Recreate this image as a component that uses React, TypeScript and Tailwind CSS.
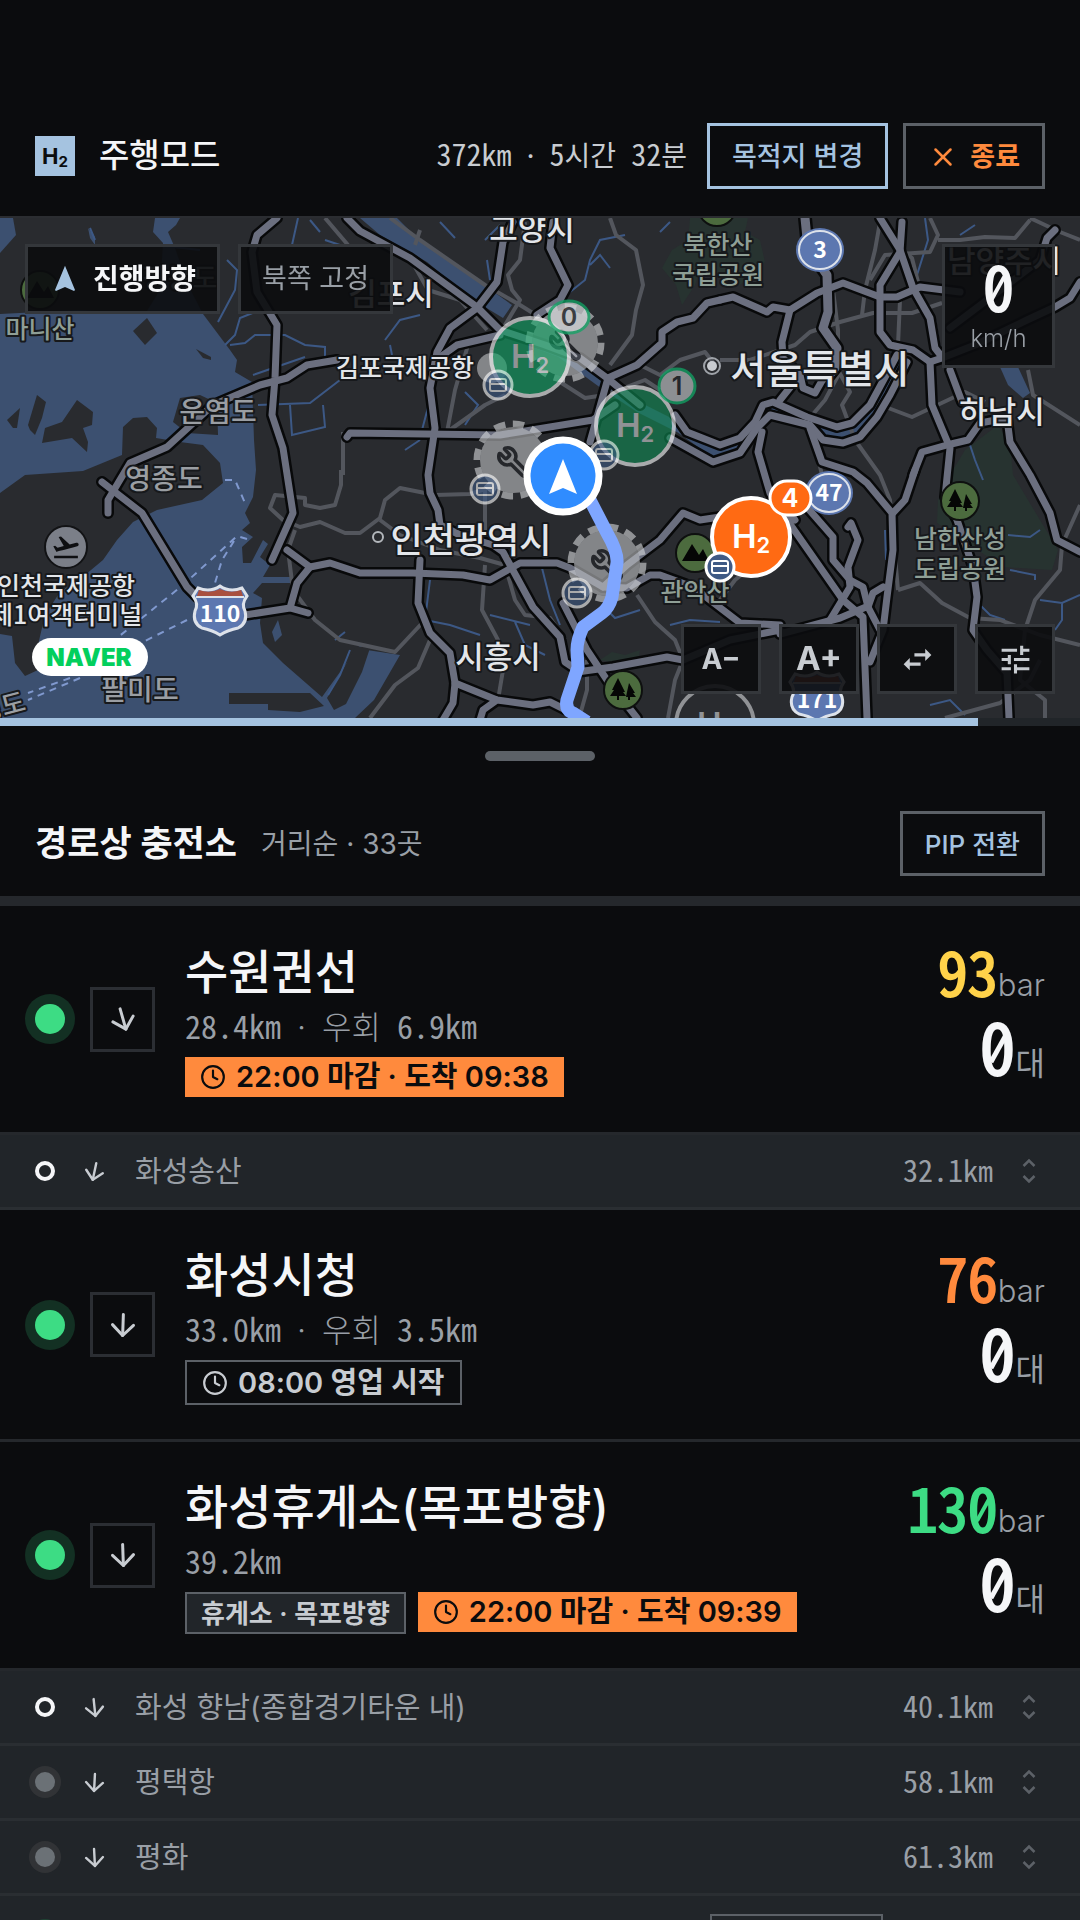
import React from 'react';
import { ArrowDown, Clock, Wrench, X } from 'lucide-react';
import { MdFlightTakeoff, MdNavigation, MdSwapHoriz, MdTune } from 'react-icons/md';
import clsx from 'clsx';

type Tone = 'yellow' | 'orange' | 'green';
type Status = 'open' | 'closed' | 'unknown' | 'dim';

interface Badge {
  kind: 'closing' | 'opening' | 'place';
  label: string;
}

interface Station {
  name: string;
  distance: string;
  turn: string;
  status: Status;
  detour?: string;
  bar?: number;
  tone?: Tone;
  queue?: number;
  badges?: Badge[];
}

const STATIONS: Station[] = [
  {
    name: '수원권선',
    distance: '28.4km',
    detour: '6.9km',
    turn: '-rotate-[16deg]',
    status: 'open',
    bar: 93,
    tone: 'yellow',
    queue: 0,
    badges: [{ kind: 'closing', label: '22:00 마감 · 도착 09:38' }],
  },
  { name: '화성송산', distance: '32.1km', turn: 'rotate-12', status: 'closed' },
  {
    name: '화성시청',
    distance: '33.0km',
    detour: '3.5km',
    turn: 'rotate-2',
    status: 'open',
    bar: 76,
    tone: 'orange',
    queue: 0,
    badges: [{ kind: 'opening', label: '08:00 영업 시작' }],
  },
  {
    name: '화성휴게소(목포방향)',
    distance: '39.2km',
    turn: '-rotate-2',
    status: 'open',
    bar: 130,
    tone: 'green',
    queue: 0,
    badges: [
      { kind: 'place', label: '휴게소 · 목포방향' },
      { kind: 'closing', label: '22:00 마감 · 도착 09:39' },
    ],
  },
  { name: '화성 향남(종합경기타운 내)', distance: '40.1km', turn: '-rotate-6', status: 'closed' },
  { name: '평택항', distance: '58.1km', turn: 'rotate-3', status: 'unknown' },
  { name: '평화', distance: '61.3km', turn: '-rotate-3', status: 'unknown' },
  {
    name: '행담도',
    distance: '70.2km',
    turn: 'rotate-0',
    status: 'dim',
    badges: [{ kind: 'place', label: '휴게소 · 양방' }],
  },
];

const TONES: Record<Tone, string> = {
  yellow: 'text-[#ffd24a]',
  orange: 'text-[#ff8a3d]',
  green: 'text-[#3ddc84]',
};

const MONO = "font-['Noto_Sans_Mono_CJK_KR','Noto_Sans_CJK_KR',monospace]";
const SANS = "font-['Inter','Noto_Sans_CJK_KR',sans-serif]";

// Digits stay monospaced, Hangul keeps its proportional width.
const MixedText: React.FC<{ text: string; hangul: string }> = ({ text, hangul }) => (
  <>
    {text.split(/([가-힣·]+)/).map((part, i) =>
      i % 2 ? (
        <span key={i} className={clsx(SANS, hangul)}>
          {part}
        </span>
      ) : (
        part
      )
    )}
  </>
);

// The mono face has no medium weight and a plain zero, so large readings
// are thickened with a stroke and get their slash on top.
const Reading: React.FC<{ value: number; className?: string }> = ({ value, className }) => (
  <span className={clsx(MONO, 'leading-none font-normal [-webkit-text-stroke:2px_currentColor]', className)}>
    {String(value)
      .split('')
      .map((digit, i) =>
        digit === '0' ? (
          <span key={i} className="relative inline-block">
            0
            <span
              aria-hidden="true"
              className="absolute top-[57%] left-1/2 h-[42%] w-[13%] -translate-x-1/2 -translate-y-1/2 rotate-[29deg] bg-current"
            />
          </span>
        ) : (
          digit
        )
      )}
  </span>
);

/* ---------- map ---------- */

const LAND = [
  'M133 331 147 318 157 333 145 345Z',
  'M196 349 211 357 211 360 203 358Z',
  'M7 420 20 408 17 428 13 428Z',
  'M28 425 37 395 46 402 42 418 35 435 30 430Z',
  'M42 443 45 428 62 422 77 400 93 412 92 425 83 428 88 442 87 452 72 438Z',
  'M180 398 200 395 217 403 218 435 187 433 173 422Z',
  'M0 493 25 475 83 471 122 455 123 427 133 418 147 417 157 428 156 438 180 442 203 445 220 463 223 483 202 500 157 510 133 522 117 540 103 560 85 575 60 592 45 615 38 645 38 670 25 676 15 663 12 636 0 634Z',
  'M229 693 310 693 324 706 300 712 268 710 268 704 229 704Z',
  'M327 698 334 710 346 704 362 672 370 648 356 646 340 675Z',
];

const MINOR_ROADS = [
  'M390 218 420 240 485 285 520 305 560 330',
  'M325 218 348 245 M410 258 428 290 460 300 487 330',
  'M420 230 415 245',
  'M525 222 520 260 508 275 512 290 520 300 505 325 487 338',
  'M610 218 616 235 636 250 643 285 636 310 632 335 610 365',
  'M468 345 455 390 447 432 M447 432 485 405 505 395',
  'M560 382 585 398 605 395 645 380 660 390',
  'M640 365 660 375 680 360 705 352 715 365',
  'M720 360 750 360 795 345 810 332 840 322 873 313 912 313 942 303',
  'M880 222 875 250 865 290 862 315',
  'M930 218 938 235 930 252 885 255 870 280',
  'M938 240 960 240 985 237 1015 238 1030 220',
  'M1030 218 1060 232 1080 240',
  'M833 290 838 330 838 370 850 392 842 405 855 440 880 475 890 500 898 590',
  'M902 250 912 258 920 290 900 300 898 345',
  'M840 372 825 400 808 420 815 445 822 475',
  'M875 403 912 417 965 392 985 402',
  'M1028 370 1033 395 1080 425',
  'M343 475 343 432',
  'M341 470 341 485 335 505 320 508 305 505 305 498 275 495 270 508 283 520 300 527 320 522 345 533 360 533 380 518 385 500 400 488 435 495 470 494 485 489 485 530',
  'M295 530 288 550 293 590 315 620 340 640 395 652 425 620',
  'M380 520 400 535 440 550 480 558 505 565',
  'M485 565 482 610 498 640 503 670 498 700',
  'M505 565 515 600 525 615 550 618 565 640',
  'M430 640 418 668 395 685 370 718',
  'M560 500 560 470',
  'M637 595 655 622 675 640 683 660 675 680 668 718',
  'M587 660 587 690 580 715',
  'M720 600 735 580 745 572',
  'M898 590 920 583 942 603 970 618 1000 620 1040 635 1080 645',
  'M1080 505 1062 545 1060 570 1035 600 1025 630 1020 680 1045 700 1045 718',
  'M945 718 1000 703 1030 680 1040 660',
];

const MAJOR_ROADS = [
  'M277 218 257 235 252 252 257 292 277 325 275 378 272 415 283 448 293 513 272 560',
  'M337 360 307 365 287 378 260 385 213 405 167 447 130 463 108 500 108 513',
  'M102 482 142 513 187 587 200 600',
  'M245 615 290 608 308 613 M290 608 297 583 310 567 287 550',
  'M310 567 330 563 360 573 413 573 463 575 490 580 520 563 557 563 570 568 603 587 627 588 650 575 660 575 693 587 740 623 780 625',
  'M347 218 360 231 410 258 477 307 500 330 545 345 580 358 607 378 640 405',
  'M513 222 503 242 497 282 477 308 450 328 437 352 430 388 435 428 428 475 430 493 438 510 440 525 460 535 493 545 503 552 533 607 560 637 565 662 577 670',
  'M553 222 550 248 568 285 560 300 537 315',
  'M500 335 457 345 443 355',
  'M347 437 350 433 500 435 593 420 615 405',
  'M720 300 707 303 693 318 677 322 662 332 662 343 637 365 608 378 590 442',
  'M720 300 733 297 767 312 773 307 790 310 817 293 843 283 880 297 897 297 920 287 960 292',
  'M790 310 782 342 783 358 800 375 780 400 M800 375 803 388 815 393 827 372',
  'M902 222 900 252 880 285 880 332 890 345 913 350 930 362 942 358 975 345 1027 320 1055 307 1070 298 1080 282',
  'M880 218 900 250 913 288 930 318 935 348 942 357',
  'M930 362 932 405 950 448 945 497 957 520 973 567 977 597 973 630 987 650 1007 673 1009 718',
  'M950 370 962 402',
  'M913 475 922 452 947 445 968 440 980 423 1007 418 1010 442 1030 475 1050 513 1057 540 1080 552',
  'M1055 230 1047 238 1040 260 950 328',
  'M675 415 687 432 720 445 740 438 755 422 763 405 773 402 807 417 837 427 852 423 870 405 897 355',
  'M670 438 713 462 740 453 757 428 770 415 810 425 823 440 843 443 860 437 877 417 890 395 907 362',
  'M762 432 758 452 770 493 792 527 843 600 863 617 867 718',
  'M810 428 822 462 853 472 867 483 892 513 893 550 887 597 883 630 870 662',
  'M915 470 905 500 893 513',
  'M780 500 795 520 M805 505 833 537 833 560 850 580 863 587 868 607 880 630',
  'M848 527 851 523 858 540 848 567 850 587 830 620 M868 607 873 593 883 587',
  'M780 634 840 618 866 607',
  'M720 517 700 520 683 513 660 540 627 565 603 587',
  'M420 560 418 603 430 633 450 653 455 683 453 703 443 720',
  'M455 683 497 700 533 705 550 702 570 712 M497 700 483 710 480 720',
  'M563 603 587 650 607 680 637 718',
  'M577 672 613 667 667 657 683 660 730 640 780 630',
];

const STREAMS = [
  'M90 228 95 240 M155 245 200 250 M227 260 237 270 235 290 218 322 M225 345 235 335 240 318 255 312',
  'M230 345 245 343 255 335 285 335 305 345 325 347 325 357',
  'M253 375 305 357 M258 405 310 403 340 380 M290 405 292 435 325 427 323 405',
  'M298 218 292 245 M310 220 320 232 M325 240 340 245',
  'M440 222 455 238 M487 260 490 280 M485 240 500 225',
  'M625 235 600 240 590 260 585 280 560 300 M590 265 600 255 610 268',
  'M660 232 670 222 M385 340 400 320 420 315 M390 345 392 355',
  'M465 392 478 405 465 425 M430 400 422 430 M405 450 420 440',
  'M925 218 928 240 917 275 M960 235 975 225 M935 320 940 350',
  'M425 620 450 625 480 635 M430 580 425 620 M490 615 530 625 M515 622 525 645 545 655',
  'M605 608 615 618 640 610 M670 625 690 620 720 622',
  'M975 600 990 615 1005 620 M1040 600 1062 603 1080 595 M1062 603 1062 620 1055 630',
  'M1008 535 1030 537 1040 530 M1010 570 1035 575 1035 580',
  'M983 480 975 460 970 445 M870 620 880 640',
  'M930 705 950 700 965 715 M345 632 335 640 M350 650 340 675 328 695',
  'M885 530 886 560 M540 560 550 600 560 625',
];

interface MapLabelProps {
  x: number;
  y: number;
  size: number;
  fill?: string;
  transform?: string;
  children: string;
}

const MapLabel: React.FC<MapLabelProps> = ({ x, y, size, fill = '#e3e6ea', transform, children }) => (
  <text
    x={x}
    y={y}
    fontSize={size}
    fill={fill}
    textAnchor="middle"
    transform={transform}
    stroke="#17191c"
    strokeWidth={4}
    strokeLinejoin="round"
    paintOrder="stroke"
    fontWeight={500}
  >
    {children}
  </text>
);

const BusDot: React.FC<{ x: number; y: number }> = ({ x, y }) => (
  <g transform={`translate(${x} ${y})`}>
    <circle r={14} fill="#3f5a85" stroke="#fff" strokeWidth={3} />
    <rect x={-8} y={-6} width={16} height={12} rx={2} fill="none" stroke="#fff" strokeWidth={2} />
    <path d="M-8 -1H8" stroke="#fff" strokeWidth={2} />
  </g>
);

const Gear: React.FC<{ x: number; y: number }> = ({ x, y }) => (
  <g transform={`translate(${x} ${y})`} opacity={0.6}>
    <circle r={36} fill="none" stroke="#d5d7da" strokeWidth={7} strokeDasharray="11.3 7.5" />
    <circle r={33} fill="#bfc1c4" />
    <g transform="scale(-1 1)">
      <Wrench x={-17} y={-15} size={34} color="#23262a" strokeWidth={2.5} />
    </g>
  </g>
);

const H2Pin: React.FC<{ x: number; y: number; fill: string; text: string; opacity?: number }> = ({
  x,
  y,
  fill,
  text,
  opacity = 1,
}) => (
  <g transform={`translate(${x} ${y})`} opacity={opacity}>
    <circle r={39} fill={fill} stroke="#fff" strokeWidth={4} />
    <text x={-19} y={11} fontSize={33} fontWeight={600} fill={text}>
      H
      <tspan fontSize={22} dy={5}>
        2
      </tspan>
    </text>
  </g>
);

const RouteOval: React.FC<{ x: number; y: number; label: string }> = ({ x, y, label }) => (
  <g transform={`translate(${x} ${y})`}>
    <ellipse rx={24} ry={22} fill="#5c77b0" />
    <ellipse rx={21} ry={19} fill="none" stroke="#dde2ea" strokeWidth={2} />
    <text y={8} fontSize={23} fontWeight={700} fill="#fff" textAnchor="middle">
      {label}
    </text>
  </g>
);

const RouteShield: React.FC<{ x: number; y: number; label: string }> = ({ x, y, label }) => (
  <g transform={`translate(${x} ${y})`}>
    <path
      d="M-22 -22 Q-10 -17 0 -24 Q10 -17 22 -22 L27 -14 Q21 -6 25 1 Q28 13 18 18 Q8 20 0 25 Q-8 20 -18 18 Q-28 13 -25 1 Q-21 -6 -27 -14Z"
      fill="#5c77b0"
      stroke="#dde2ea"
      strokeWidth={3}
    />
    <path d="M-21 -20 Q-10 -16 0 -21 Q10 -16 21 -20 L23 -14H-23Z" fill="#a9503f" />
    <path d="M-24 -13H24" stroke="#dde2ea" strokeWidth={2} />
    <text y={12} fontSize={23} fontWeight={700} fill="#fff" textAnchor="middle">
      {label}
    </text>
  </g>
);

const ParkDot: React.FC<{ x: number; y: number; kind?: 'trees' | 'peak' }> = ({ x, y, kind = 'trees' }) => (
  <g transform={`translate(${x} ${y})`}>
    <circle r={19} fill="#4c6b3e" stroke="#0e100f" strokeWidth={2} />
    {kind === 'trees' ? (
      <path d="M-5 -12 2 2H0L3 6H-4V10H-6V6H-13L-9 0H-11ZM6 -7 12 3H10L13 7H7V10H5V7H3L4 2Z" fill="#050605" />
    ) : (
      <path d="M-13 8 -3 -9 4 2 8 -4 14 8Z" fill="#050605" />
    )}
  </g>
);

const RouteMap: React.FC = () => (
  <svg
    viewBox="0 218 1080 500"
    preserveAspectRatio="xMidYMid slice"
    className={clsx('block h-full w-full', "font-['Noto_Sans_CJK_KR',sans-serif]")}
    role="img"
    aria-label="경로 지도"
  >
    <rect x={0} y={218} width={1080} height={500} fill="#292b2f" />
    <g fill="#273330">
      <path d="M690 218H748L745 232 760 240 765 262 740 285 700 270 695 285 682 305 676 285 662 268 672 250 688 240Z" />
      <path d="M998 425 1010 445 1013 475 1040 520 1058 550 1052 570 1003 567 937 523 938 500 953 470 965 450Z" />
      <path d="M600 660 612 652 625 655 640 650 637 668Z" />
    </g>
    <g fill="#3c5070">
      <path d="M0 218H13L16 235 0 253Z" />
      <path d="M155 218H180L176 225 168 232 175 248 188 285 203 314 215 330 230 350 237 360 235 372 252 382 254 440 256 470 253 497 245 513 250 523 242 530 253 537 242 547 243 563 251 563 263 540 268 544 260 557 270 565 263 577H290V583H262L253 593 262 598 260 623 263 643 283 663 322 697 340 672 360 645 367 650 400 655 374 700 355 718H0V314L78 310 145 314 160 290 163 243 153 232Z" />
      <path d="M360 218H397L417 238 470 275 512 305 503 318 470 298 427 262 380 235Z" />
      <path d="M1000 367H1018L1030 393 1023 398 1008 385Z" />
      <path d="M88 228 95 237 95 245 90 238Z" />
    </g>
    <g fill="#292b2f">
      {LAND.map((d) => (
        <path key={d} d={d} />
      ))}
    </g>
    <path d="M278 620 282 635 275 642 272 632Z" fill="#3c5070" />
    <path
      d="M500 330 560 352 605 385 640 408 680 428 715 453 738 447 760 420 770 408 815 428 840 435 855 431 875 410 900 360"
      fill="none"
      stroke="#3c5070"
      strokeWidth={10}
    />
    <g fill="none" stroke="#3c5885" strokeWidth={2}>
      {STREAMS.map((d) => (
        <path key={d} d={d} />
      ))}
    </g>
    <g fill="none" stroke="#8099cf" strokeWidth={2} strokeDasharray="7 6">
      <path d="M225 480H235L245 503M247 539 237 536 183 585 117 638M234 541 222 560 215 583M187 620 143 642M80 678 28 700M70 678 28 693" />
    </g>
    <g fill="none" stroke="#53565d" strokeWidth={4} strokeLinejoin="round">
      {MINOR_ROADS.map((d) => (
        <path key={d} d={d} />
      ))}
    </g>
    <g fill="none" stroke="#08090a" strokeWidth={12} strokeLinejoin="round" strokeLinecap="round">
      {MAJOR_ROADS.map((d) => (
        <path key={d} d={d} />
      ))}
      <path d="M805 218 808 248 827 275 828 312 823 328 837 348 835 368 827 378" strokeWidth={14} />
    </g>
    <g fill="none" stroke="#6b6f7f" strokeWidth={7} strokeLinejoin="round" strokeLinecap="round">
      {MAJOR_ROADS.map((d) => (
        <path key={d} d={d} />
      ))}
      <path d="M805 218 808 248 827 275 828 312 823 328 837 348 835 368 827 378" strokeWidth={9} />
    </g>

    <ParkDot x={40} y={290} kind="peak" />
    <ParkDot x={717} y={207} kind="peak" />
    <ParkDot x={695} y={553} kind="peak" />
    <ParkDot x={960} y={501} />
    <ParkDot x={623} y={690} />
    <circle cx={66} cy={547} r={21} fill="#7b7f88" stroke="#121315" strokeWidth={2} />
    <MdFlightTakeoff x={51} y={532} size={30} color="#0e0f11" />
    <circle cx={712} cy={366} r={5} fill="#c8cbd0" />
    <circle cx={712} cy={366} r={8} fill="none" stroke="#9fa3a9" strokeWidth={2} />
    <circle cx={378} cy={537} r={5} fill="none" stroke="#b3b7bc" strokeWidth={2} />
    <RouteOval x={820} y={250} label="3" />
    <RouteOval x={829} y={493} label="47" />
    <RouteShield x={220} y={610} label="110" />
    <RouteShield x={817} y={696} label="171" />

    <MapLabel x={532} y={240} size={31}>고양시</MapLabel>
    <MapLabel x={391} y={305} size={31}>김포시</MapLabel>
    <MapLabel x={405} y={377} size={25}>김포국제공항</MapLabel>
    <MapLabel x={820} y={383} size={39}>서울특별시</MapLabel>
    <MapLabel x={471} y={553} size={35}>인천광역시</MapLabel>
    <MapLabel x={498} y={668} size={31}>시흥시</MapLabel>
    <MapLabel x={1002} y={423} size={31}>하남시</MapLabel>
    <MapLabel x={1004} y={272} size={31}>남양주시</MapLabel>
    <MapLabel x={40} y={338} size={25} fill="#8f9f96">마니산</MapLabel>
    <MapLabel x={180} y={288} size={27} fill="#9a9ea3">장봉도</MapLabel>
    <MapLabel x={218} y={422} size={28} fill="#9a9ea3">운염도</MapLabel>
    <MapLabel x={164} y={489} size={28} fill="#9a9ea3">영종도</MapLabel>
    <MapLabel x={140} y={700} size={28} fill="#9a9ea3">팔미도</MapLabel>
    <MapLabel x={718} y={254} size={25} fill="#8f9f96">북한산</MapLabel>
    <MapLabel x={718} y={284} size={25} fill="#8f9f96">국립공원</MapLabel>
    <MapLabel x={960} y={548} size={25} fill="#8f9f96">남한산성</MapLabel>
    <MapLabel x={960} y={578} size={25} fill="#8f9f96">도립공원</MapLabel>
    <MapLabel x={695} y={601} size={25} fill="#8f9f96">관악산</MapLabel>
    <MapLabel x={66} y={595} size={25}>인천국제공항</MapLabel>
    <MapLabel x={66} y={624} size={25}>제1여객터미널</MapLabel>
    <MapLabel x={4} y={716} size={26} fill="#9a9ea3" transform="rotate(-15 4 716)">경도</MapLabel>

    <g className={SANS}>
      <Gear x={565} y={343} />
      <g opacity={0.6}>
        <circle cx={492} cy={368} r={15} fill="#bfc1c4" />
      </g>
      <H2Pin x={530} y={357} fill="#10a565" text="#d5d7da" opacity={0.6} />
      <g opacity={0.75}>
        <ellipse cx={569} cy={317} rx={20} ry={16} fill="#d5d7da" stroke="#10a565" strokeWidth={3} />
        <text x={569} y={326} fontSize={25} fontWeight={600} fill="#23262a" textAnchor="middle">
          0
        </text>
      </g>
      <H2Pin x={635} y={426} fill="#108d55" text="#d5d7da" opacity={0.6} />
      <g opacity={0.75}>
        <ellipse cx={677} cy={386} rx={18} ry={17} fill="#aeb1b4" stroke="#10a565" strokeWidth={3} />
        <text x={677} y={395} fontSize={25} fontWeight={600} fill="#23262a" textAnchor="middle">
          1
        </text>
      </g>
      <Gear x={513} y={460} />
      <Gear x={607} y={563} />
      <g opacity={0.6}>
        <BusDot x={498} y={385} />
        <BusDot x={604} y={455} />
        <BusDot x={485} y={489} />
        <BusDot x={577} y={593} />
      </g>
      <path
        d="M590 500 607 533Q618 552 617 563L612 597Q609 608 602 613L583 627Q577 640 577 650L578 667 567 700Q565 710 573 713L587 722"
        fill="none"
        stroke="#7fa6ff"
        strokeWidth={13}
        strokeLinejoin="round"
      />
      <circle cx={563} cy={476} r={36} fill="#2f8cff" stroke="#fff" strokeWidth={7} />
      <path d="M563 459 577 494 563 488 549 494Z" fill="#fff" />
      <g transform="translate(715 725)" opacity={0.6}>
        <circle r={39} fill="#292b2f" stroke="#d5d7da" strokeWidth={4} />
        <text x={-18} y={11} fontSize={33} fontWeight={600} fill="#d5d7da">
          H
        </text>
      </g>
      <H2Pin x={751} y={537} fill="#ff6a13" text="#fff" />
      <rect x={770} y={481} width={41} height={34} rx={17} fill="#ff6a13" stroke="#fff" strokeWidth={3} />
      <text x={790} y={507} fontSize={25} fontWeight={700} fill="#fff" textAnchor="middle">
        4
      </text>
      <BusDot x={720} y={567} />
      <rect x={32} y={638} width={116} height={38} rx={19} fill="#fff" />
      <text x={89} y={666} fontSize={24} fontWeight={900} fill="#03cf5d" textAnchor="middle">
        NAVER
      </text>
    </g>
  </svg>
);

/* ---------- map controls ---------- */

const OVERLAY = 'flex items-center justify-center border-3 border-[#34373b] bg-[#0b0c0e]/90';

const MapControls: React.FC = () => (
  <div className="absolute inset-0 flex flex-col justify-between px-[25px] pt-[26px] pb-6">
    <div className="flex items-start justify-between">
      <div className="flex gap-[18px]">
        <button type="button" aria-pressed="true" className={clsx(OVERLAY, 'h-[70px] gap-3 px-[21px]')}>
          <MdNavigation className="text-[#a5c3e0]" size={32} />
          <span className="text-[28px] font-bold text-[#f5f6f8]">진행방향</span>
        </button>
        <button
          type="button"
          aria-pressed="false"
          className={clsx(OVERLAY, 'h-[70px] px-[21px] text-[27px] font-normal text-[#999fa6]')}
        >
          북쪽 고정
        </button>
      </div>
      <div className={clsx(OVERLAY, 'h-[124px] w-[113px] flex-col gap-2 pb-1')}>
        <Reading value={0} className="text-[62px] text-[#f5f6f8]" />
        <span className="text-[24px] leading-[32px] font-light text-[#999fa6]">km/h</span>
      </div>
    </div>
    <div className="flex justify-end gap-[18px] text-[#c8ccd1]">
      <button type="button" aria-label="글자 작게" className={clsx(OVERLAY, 'h-[70px] w-20 text-[28px] font-bold')}>
        A−
      </button>
      <button type="button" aria-label="글자 크게" className={clsx(OVERLAY, 'h-[70px] w-20 text-[33px] font-bold')}>
        A+
      </button>
      <button type="button" aria-label="좌우 전환" className={clsx(OVERLAY, 'h-[70px] w-20')}>
        <MdSwapHoriz size={37} />
      </button>
      <button type="button" aria-label="필터" className={clsx(OVERLAY, 'h-[70px] w-20')}>
        <MdTune size={37} />
      </button>
    </div>
  </div>
);

/* ---------- station list ---------- */

const StatusDot: React.FC<{ status: Status }> = ({ status }) => {
  if (status === 'closed') {
    return <span className="size-5 rounded-full border-4 border-[#f5f6f8]" />;
  }
  return (
    <span
      className={clsx(
        'flex items-center justify-center rounded-full',
        status === 'open' && 'size-[50px] bg-[#133023]',
        status === 'unknown' && 'size-8 bg-[#313336]',
        status === 'dim' && 'size-8 bg-[#1f4434]'
      )}
    >
      <span
        className={clsx(
          'rounded-full',
          status === 'open' && 'size-[30px] bg-[#3ddc84]',
          status === 'unknown' && 'size-5 bg-[#6b7176]',
          status === 'dim' && 'size-5 bg-[#3ddc84]'
        )}
      />
    </span>
  );
};

const StationBadge: React.FC<{ badge: Badge }> = ({ badge }) => {
  if (badge.kind === 'closing') {
    return (
      <span className="flex h-10 items-center gap-2.5 bg-[#ff8a3d] px-[15px] text-[29px] font-semibold text-[#0b0c0e]">
        <Clock size={26} strokeWidth={2} />
        {badge.label}
      </span>
    );
  }
  if (badge.kind === 'opening') {
    return (
      <span className="flex h-[45px] items-center gap-2.5 border-2 border-[#5c6167] px-[15px] text-[29px] font-semibold text-[#c8ccd1]">
        <Clock size={26} strokeWidth={2} />
        {badge.label}
      </span>
    );
  }
  return (
    <span className="flex h-[42px] items-center border-2 border-[#5c6167] bg-[#212529] px-3.5 text-[26px] font-semibold text-[#c8ccd1]">
      {badge.label}
    </span>
  );
};

const StationRow: React.FC<{ station: Station }> = ({ station }) => (
  <li className="flex items-center border-b-3 border-[#25282c] bg-[#0b0c0e] py-[34px] pr-[35px] pl-[25px]">
    <StatusDot status={station.status} />
    <span className="ml-[15px] flex size-[65px] items-center justify-center border-3 border-[#2b2e33] text-[#c8ccd1]">
      <ArrowDown size={36} className={station.turn} />
    </span>
    <div className="ml-[30px] flex-1">
      <h3 className="text-[47px] leading-[62px] font-medium text-[#f5f6f8]">{station.name}</h3>
      <p className={clsx(MONO, 'h-[54px] text-[32px] leading-[44px] text-[#999fa6]')}>
        <MixedText
          text={station.detour ? `${station.distance} · 우회 ${station.detour}` : station.distance}
          hangul="text-[32px] font-light"
        />
      </p>
      <div className="flex items-start gap-3">
        {station.badges?.map((badge) => (
          <StationBadge key={badge.label} badge={badge} />
        ))}
      </div>
    </div>
    <div className="flex flex-col gap-2 pb-[18px] leading-none text-[#999fa6]">
      <p className="flex items-baseline justify-end">
        <Reading value={station.bar ?? 0} className={clsx('text-[60px]', station.tone && TONES[station.tone])} />
        <span className="text-[31px] font-light">bar</span>
      </p>
      <p className="flex items-baseline justify-end">
        <Reading value={station.queue ?? 0} className="text-[72px] text-[#f5f6f8]" />
        <span className="text-[32px] font-normal">대</span>
      </p>
    </div>
  </li>
);

const CompactRow: React.FC<{ station: Station }> = ({ station }) => (
  <li
    className={clsx(
      'flex items-center border-b-3 border-[#2a2e32] bg-[#212529] pr-[35px] pl-[25px]',
      station.badges ? 'h-[81px]' : 'h-[75px]'
    )}
  >
    <span className="flex w-10 justify-center">
      <StatusDot status={station.status} />
    </span>
    <ArrowDown size={29} className={clsx('ml-[15px] text-[#c8ccd1]', station.turn)} />
    <span className="ml-[26px] flex-1 pt-0.5 text-[29px] font-normal text-[#999fa6]">{station.name}</span>
    {station.badges?.map((badge) => (
      <span key={badge.label} className="mr-5">
        <StationBadge badge={badge} />
      </span>
    ))}
    <span className={clsx(MONO, 'pb-1 text-[30px] text-[#999fa6]')}>{station.distance}</span>
    <button type="button" aria-label={`${station.name} 펼치기`} className="ml-[20px] flex size-8 items-center justify-center text-[#5c6167]">
      <svg width="16" height="26" viewBox="0 0 16 26" fill="none" stroke="currentColor" strokeWidth="2.5">
        <path d="M2.5 8 8 2.5 13.5 8M2.5 18 8 23.5 13.5 18" />
      </svg>
    </button>
  </li>
);

/* ---------- page ---------- */

export default function App() {
  return (
    <div className={clsx(SANS, 'flex h-screen flex-col overflow-hidden bg-[#0b0c0e] text-[#f5f6f8]')}>
      <header className="flex h-[218px] shrink-0 items-end border-b-2 border-[#2b2d31] px-[35px] pb-[27px]">
        <div className="flex h-[66px] flex-1 items-center">
          <span className="flex size-10 items-center justify-center bg-[#a5c3e0] text-[22px] font-bold text-[#0b0c0e]">
            <span>
              H<sub className="text-[15px]">2</sub>
            </span>
          </span>
          <h1 className="ml-6 flex-1 text-[33px] font-medium">주행모드</h1>
          <p className={clsx(MONO, 'mr-5 pb-1 text-[30px] text-[#c8ccd1]')}>
            <MixedText text="372km · 5시간 32분" hangul="text-[28px] font-normal" />
          </p>
          <button type="button" className="h-[66px] border-3 border-[#a5c3e0] px-[22px] pt-0.5 text-[27px] font-medium text-[#a5c3e0]">
            목적지 변경
          </button>
          <button
            type="button"
            className="ml-[15px] flex h-[66px] items-center gap-3 border-3 border-[#5c6167] px-[22px] pt-0.5 text-[27px] font-bold text-[#ff8a3d]"
          >
            <X size={30} strokeWidth={2} />
            종료
          </button>
        </div>
      </header>

      <main className="flex min-h-0 flex-1 flex-col">
        <section className="relative h-[500px] shrink-0">
          <RouteMap />
          <MapControls />
        </section>
        <div className="h-2 shrink-0 bg-[#212529]" role="progressbar" aria-label="주행 진행률" aria-valuenow={91}>
          <div className="h-full bg-[#a5c3e0]" style={{ width: '90.6%' }} />
        </div>

        <div className="flex shrink-0 justify-center pt-[25px]">
          <span className="h-2.5 w-[110px] rounded-full bg-[#5c6167]" />
        </div>

        <section className="flex min-h-0 flex-1 flex-col">
          <div className="flex shrink-0 items-center border-b-10 border-[#25282c] px-[35px] pt-[50px] pb-5">
            <h2 className="text-[35px] font-semibold">경로상 충전소</h2>
            <p className="ml-6 flex-1 text-[28px] font-normal text-[#999fa6]">거리순 · 33곳</p>
            <button type="button" className="h-[65px] border-3 border-[#5c6167] px-[22px] pt-0.5 text-[26px] font-medium text-[#a5c3e0]">
              PIP 전환
            </button>
          </div>
          <ul className="min-h-0 flex-1 overflow-hidden">
            {STATIONS.map((station) =>
              station.bar !== undefined ? (
                <StationRow key={station.name} station={station} />
              ) : (
                <CompactRow key={station.name} station={station} />
              )
            )}
          </ul>
        </section>
      </main>
    </div>
  );
}
